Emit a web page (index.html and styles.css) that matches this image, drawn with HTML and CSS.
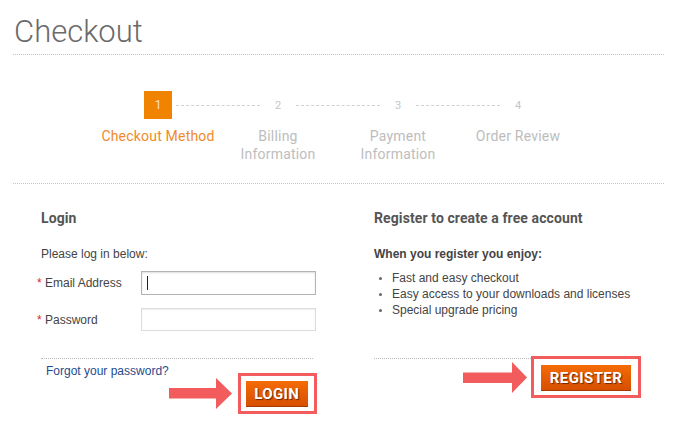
FILE: index.html
```html
<!DOCTYPE html>
<html lang="en">
<head>
<meta charset="utf-8">
<title>Checkout</title>
<link rel="stylesheet" href="styles.css">
</head>
<body>
<div class="page">
  <h1 class="title">Checkout</h1>

  <section class="steps">
    <div class="track">
      <span class="num num-active">1</span>
      <span class="dash"></span>
      <span class="num">2</span>
      <span class="dash"></span>
      <span class="num">3</span>
      <span class="dash"></span>
      <span class="num">4</span>
    </div>
    <div class="labels">
      <span class="label label-active">Checkout Method</span>
      <span class="label">Billing<br>Information</span>
      <span class="label">Payment<br>Information</span>
      <span class="label">Order Review</span>
    </div>
  </section>

  <section class="panels">
    <div class="panel-body">
      <h2 class="panel-title">Login</h2>
      <p class="intro">Please log in below:</p>
      <div class="field-row">
        <label class="field-label"><span class="req">*</span> Email Address</label>
        <span class="field-wrap">
          <input class="field field-focus" type="text">
          <span class="caret"></span>
        </span>
      </div>
      <div class="field-row field-row-2">
        <label class="field-label"><span class="req">*</span> Password</label>
        <span class="field-wrap">
          <input class="field" type="password">
        </span>
      </div>
    </div>

    <div class="panel-body">
      <h2 class="panel-title">Register to create a free account</h2>
      <p class="intro intro-bold">When you register you enjoy:</p>
      <ul class="perks">
        <li>Fast and easy checkout</li>
        <li>Easy access to your downloads and licenses</li>
        <li>Special upgrade pricing</li>
      </ul>
    </div>

    <div class="panel-foot">
      <div class="foot-line foot-line-left"></div>
      <div class="foot-row">
        <a class="forgot" href="#">Forgot your password?</a>
        <div class="actions actions-login">
          <svg class="arrow arrow-login" width="63" height="31" viewBox="0 0 63 31">
            <rect x="0" y="10" width="48" height="10.5" fill="#f25c5c"/>
            <polygon points="47,0 63,15.5 47,31" fill="#f25c5c"/>
          </svg>
          <div class="hl hl-login"><button class="btn btn-login">LOGIN</button></div>
        </div>
      </div>
    </div>

    <div class="panel-foot">
      <div class="foot-line"></div>
      <div class="actions actions-register">
        <svg class="arrow arrow-register" width="64" height="31" viewBox="0 0 64 31">
          <rect x="0" y="10.5" width="50" height="10.5" fill="#f25c5c"/>
          <polygon points="49,0 64,15.5 49,31" fill="#f25c5c"/>
        </svg>
        <div class="hl hl-register"><button class="btn btn-register">REGISTER</button></div>
      </div>
    </div>
  </section>
</div>
</body>
</html>
```

FILE: styles.css
```css
* { box-sizing: border-box; }

body {
  margin: 0;
  background: #fff;
  font-family: "Liberation Sans", Arial, sans-serif;
  color: #444;
}

.page {
  width: 651px;
  margin-left: 13px;
}

.title {
  margin: 0;
  padding: 16px 0 6px 1px;
  font-family: Roboto, "Liberation Sans", sans-serif;
  font-weight: 300;
  font-size: 31px;
  line-height: 32px;
  color: #6a6a6a;
  border-bottom: 1px dotted #c4c4c4;
}

/* steps */
.steps {
  padding: 36px 0 20px;
  border-bottom: 1px dotted #c4c4c4;
}

.track {
  display: flex;
  align-items: center;
  margin-left: 131px;
  height: 28px;
}

.num {
  width: 28px;
  height: 28px;
  display: flex;
  align-items: center;
  justify-content: center;
  font-family: Roboto, "Liberation Sans", sans-serif;
  font-size: 11px;
  color: #c6c6c6;
}

.num-active {
  background: #f08300;
  color: #fde0c0;
  font-size: 12px;
}

.dash {
  width: 84px;
  margin: 0 4px;
  border-top: 1px dashed #d0d0d0;
}

.labels {
  display: grid;
  grid-template-columns: repeat(4, 120px);
  margin-left: 85px;
  margin-top: 8px;
}

.label {
  text-align: center;
  font-family: Roboto, "Liberation Sans", sans-serif;
  font-size: 14px;
  line-height: 18px;
  color: #bdbdbd;
  letter-spacing: 0.2px;
}

.label-active { color: #f08a2c; }

/* panels */
.panels {
  display: grid;
  grid-template-columns: 275px 267px;
  column-gap: 58px;
  margin-left: 28px;
  padding-top: 25px;
}

.panel-title {
  margin: 0;
  font-family: Roboto, "Liberation Sans", sans-serif;
  font-weight: 700;
  font-size: 14px;
  line-height: 18px;
  color: #555;
  letter-spacing: 0.1px;
}

.intro {
  margin: 19px 0 0;
  font-size: 12px;
  line-height: 16px;
  color: #444;
}

.intro-bold { font-weight: 700; }

.field-row {
  display: flex;
  align-items: center;
  margin-top: 9px;
  height: 24px;
}

.field-row-2 {
  margin-top: 13px;
  height: 23px;
}

.field-label {
  width: 104px;
  margin-left: -4px;
  padding-right: 4px;
  font-size: 12px;
  color: #444;
}

.req { color: #e0242b; }

.field-wrap {
  position: relative;
  display: block;
}

.field {
  display: block;
  width: 175px;
  height: 24px;
  margin: 0;
  padding: 0 6px;
  border: 1px solid #dcdcdc;
  box-shadow: inset 0 1px 2px #eee;
  background: #fff;
  outline: none;
}

.field-row-2 .field { height: 23px; }

.field-focus {
  border: 1px solid #b4b4b4;
  box-shadow: inset 0 1px 2px #ddd;
}

.caret {
  position: absolute;
  left: 6px;
  top: 5px;
  width: 1px;
  height: 14px;
  background: #222;
}

.perks {
  margin: 8px 0 0;
  padding: 0 0 0 18px;
  font-size: 12px;
  line-height: 16px;
  color: #444;
}

.perks li::marker { color: #666; font-size: 10px; }

/* footers */
.panel-foot { margin-top: 27px; }

.foot-line {
  height: 1px;
  border-top: 1px dotted #bdbdbd;
}

.foot-line-left { width: 272px; }

.foot-row {
  display: flex;
  justify-content: space-between;
  align-items: flex-start;
}

.forgot {
  flex: none;
  white-space: nowrap;
  margin-top: 5px;
  padding-left: 5px;
  font-size: 12px;
  line-height: 14px;
  color: #1f4b8e;
  text-decoration: none;
}

.actions {
  display: flex;
  align-items: flex-start;
}

.actions-login { margin-top: 14px; }

.actions-register {
  justify-content: flex-end;
  margin-top: -3px;
}

.arrow { display: block; flex: none; }
.arrow-login { margin: 5px 6px 0 0; }
.arrow-register { margin: 6px 4px 0 0; }

.hl {
  border: 3px solid #f25c5c;
  background: #fff;
}

.hl-login { padding: 5px 6px 4px 5px; }
.hl-register { padding: 6px 7px 4px 7px; }

.btn {
  display: block;
  margin: 0;
  height: 26px;
  border: 0;
  border-bottom: 1px solid #a83a00;
  background: linear-gradient(#f56b06, #d65000);
  font-family: Roboto, "Liberation Sans", sans-serif;
  font-weight: 700;
  font-size: 15px;
  letter-spacing: 0.4px;
  color: #fff;
  text-shadow: 1px 1px 1px #6e2600;
  padding: 0;
  cursor: pointer;
}

.btn-login { width: 62px; }
.btn-register { width: 90px; }
```
